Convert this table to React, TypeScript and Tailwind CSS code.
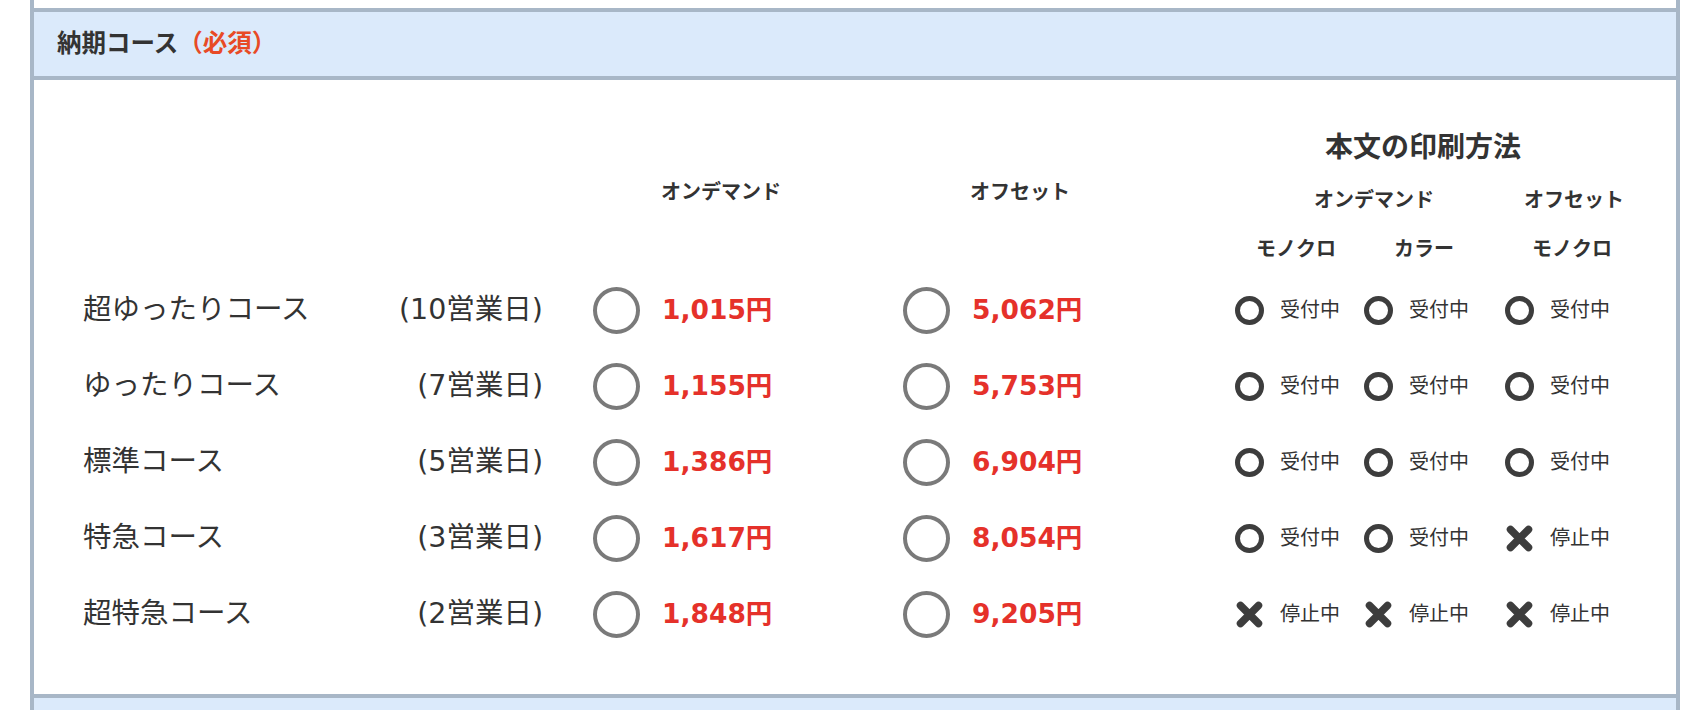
import React from 'react';

const rows = [
  { name: '超ゆったりコース', days: '(10営業日)', od: '1,015円', os: '5,062円', st: [true, true, true] },
  { name: 'ゆったりコース', days: '(7営業日)', od: '1,155円', os: '5,753円', st: [true, true, true] },
  { name: '標準コース', days: '(5営業日)', od: '1,386円', os: '6,904円', st: [true, true, true] },
  { name: '特急コース', days: '(3営業日)', od: '1,617円', os: '8,054円', st: [true, true, false] },
  { name: '超特急コース', days: '(2営業日)', od: '1,848円', os: '9,205円', st: [false, false, false] },
];

const font = { fontFamily: '"DejaVu Sans", "Noto Sans CJK JP", sans-serif' };

const Status: React.FC<{ ok: boolean; className: string }> = ({ ok, className }) => (
  <div className={`flex items-center ${className}`}>
    {ok ? (
      <span className="block w-[29px] h-[29px] rounded-full border-[5px] border-[#3d3d3d] shrink-0" />
    ) : (
      <svg width="29" height="29" viewBox="0 0 29 29" className="shrink-0">
        <path d="M5.5 5.5 L23.5 23.5 M23.5 5.5 L5.5 23.5" stroke="#3d3d3d" strokeWidth="7.5" strokeLinecap="round" />
      </svg>
    )}
    <span className="ml-[16px] text-[20px] text-[#333]">{ok ? '受付中' : '停止中'}</span>
  </div>
);

const Radio: React.FC<{ className?: string }> = ({ className = '' }) => (
  <span className={`block w-[47px] h-[47px] rounded-full border-4 border-[#7a7a7a] shrink-0 ${className}`} />
);

export default function App() {
  return (
    <div className="min-h-[710px] bg-white" style={font}>
      <div className="ml-[30px] w-[1650px] border-x-4 border-[#a8b7c7] pt-[8px]">
        <div className="border-y-4 border-[#a8b7c7] bg-[#dbeafb] h-[72px] flex items-center pl-[23px]">
          <span className="text-[24.5px] font-bold text-[#333]">
            納期コース<span className="text-[#e84a26]">（必須）</span>
          </span>
        </div>

        <div className="pb-[42px]">
          {/* headings */}
          <div className="flex h-[192px]">
            <div className="w-[629px] shrink-0" />
            <div className="w-[310px] shrink-0 pt-[96px] -ml-[2px]">
              <div className="h-[32px] flex items-center text-[20px] font-bold text-[#333]">オンデマンド</div>
            </div>
            <div className="w-[266px] shrink-0 pt-[96px] -ml-[1px]">
              <div className="h-[32px] flex items-center text-[20px] font-bold text-[#333]">オフセット</div>
            </div>
            <div className="flex-1 pt-[50px] text-[#333] font-bold">
              <div className="h-[36px] flex items-center pl-[89px] text-[28px]">本文の印刷方法</div>
              <div className="mt-[18px] h-[32px] flex items-center text-[20px]">
                <div className="w-[270px] pl-[78px]">オンデマンド</div>
                <div className="pl-[18px]">オフセット</div>
              </div>
              <div className="mt-[17px] h-[32px] flex items-center text-[20px]">
                <div className="w-[129px] pl-[20px]">モノクロ</div>
                <div className="w-[141px] pl-[29px]">カラー</div>
                <div className="pl-[26px]">モノクロ</div>
              </div>
            </div>
          </div>

          {/* course rows */}
          {rows.map((r) => (
            <div key={r.name} className="flex items-center h-[76px] pl-[49px]">
              <div className="w-[460px] shrink-0 flex justify-between items-center text-[28.5px] text-[#333]">
                <span>{r.name}</span>
                <span>{r.days}</span>
              </div>
              <Radio className="ml-[50px]" />
              <div className="ml-[22px] w-[241px] shrink-0 text-[26.5px] font-bold text-[#e5312a]">{r.od}</div>
              <Radio />
              <div className="ml-[22px] w-[263px] shrink-0 text-[26.5px] font-bold text-[#e5312a]">{r.os}</div>
              <Status ok={r.st[0]} className="w-[129px]" />
              <Status ok={r.st[1]} className="w-[141px]" />
              <Status ok={r.st[2]} className="flex-1" />
            </div>
          ))}
        </div>

        <div className="border-t-4 border-[#a8b7c7] bg-[#dbeafb] h-[40px]" />
      </div>
    </div>
  );
}
